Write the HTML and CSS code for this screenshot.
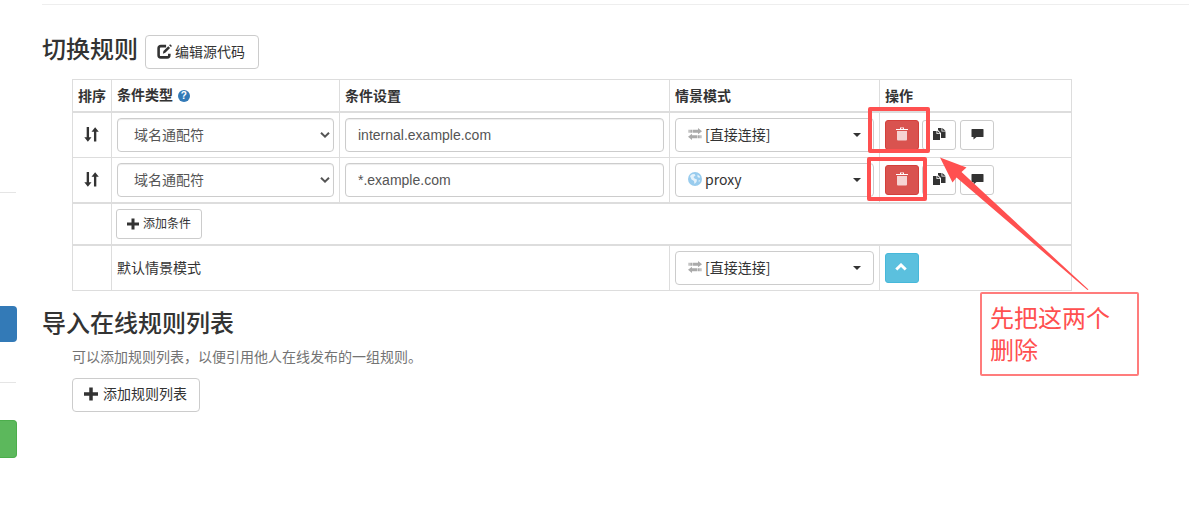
FILE: index.html
```html
<!DOCTYPE html>
<html lang="zh-CN">
<head>
    <meta charset="UTF-8">
    <meta name="viewport" content="width=device-width, initial-scale=1.0">
    <title>切换规则</title>
    <link rel="stylesheet" href="styles.css">
</head>
<body>
    <!-- Shared icons -->
    <svg class="sprite" aria-hidden="true">
        <symbol id="icon-edit" viewBox="0 0 14 14">
            <path d="M8.500 2H3.500A2 2 0 0 0 1.500 4V10.500A2 2 0 0 0 3.500 12.500H9.500A2 2 0 0 0 11.500 10.500V9" fill="none" stroke="currentColor" stroke-width="2.400"/>
            <path d="M5.500 9L6 6.500L10.500 2L12.200 3.700L7.700 8.200ZM11.300 1.200L12.300 0.200L14 1.900L13 2.900Z" fill="currentColor"/>
        </symbol>
        <symbol id="icon-sort" viewBox="0 0 14 14">
            <path d="M2.500 0H4.700V9.500H7L3.600 13.700L0.300 9.500H2.500ZM9.300 13.500H11.500V4.500H13.800L10.400 0.300L7 4.500H9.300Z" fill="currentColor"/>
        </symbol>
        <symbol id="icon-plus" viewBox="0 0 12 12">
            <path d="M4.500 0.500H7.500V4.500H12V7.500H7.500V11.500H4.500V7.500H0V4.500H4.500Z" fill="currentColor"/>
        </symbol>
        <symbol id="icon-trash" viewBox="0 0 12 14">
            <path d="M0 3V2H4V0.500H8V2H12V3ZM5 2H7V1.300H5Z" fill="currentColor" fill-rule="evenodd"/>
            <path d="M1 4H11V12.500Q11 13.500 10 13.500H2Q1 13.500 1 12.500Z" fill="currentColor" opacity=".75"/>
        </symbol>
        <symbol id="icon-copy" viewBox="0 0 13 12">
            <path d="M0 3H3.500V6H7V12H0ZM4.300 2.800L7 5.300H4.300ZM5 0H8.500V3.500H12.500V10H8V5L5 2ZM9.300 0L12.500 2.800H9.300Z" fill="currentColor"/>
        </symbol>
        <symbol id="icon-comment" viewBox="0 0 13 12">
            <path d="M1 1H12Q12.500 1 12.500 1.500V8.500Q12.500 9 12 9H5.500L2.500 11.500V9H1Q0.500 9 0.500 8.500V1.500Q0.500 1 1 1Z" fill="currentColor"/>
        </symbol>
        <symbol id="icon-transfer" viewBox="0 0 14 12">
            <path d="M0.500 1.700H1.700V4.700H0.500ZM2.200 1.700H4V4.700H2.200ZM4.500 1.700H10V0L14 3.200L10 6.200V4.700H4.500ZM13.500 7.300H12.300V10.300H13.500ZM11.800 7.300H10V10.300H11.800ZM9.500 7.300H4V5.800L0 8.800L4 12V10.300H9.500Z" fill="currentColor"/>
        </symbol>
        <symbol id="icon-globe" viewBox="0 0 14 14">
            <circle cx="7" cy="7" r="7" fill="currentColor"/>
            <path d="M2 4L4 2.200L6.500 2L7.500 3.500L5.500 5L6.500 6.500L9 7.500L8.500 10L6.500 12L6 9L3.500 7.500ZM9.500 2.500L12 4.500L11.500 6L9.500 5ZM10.500 8.500L12 8L11 10.500Z" fill="#fff" opacity=".75"/>
        </symbol>
        <symbol id="icon-up" viewBox="0 0 12 8">
            <path d="M1.300 6.500L6 2L10.700 6.500" fill="none" stroke="currentColor" stroke-width="3"/>
        </symbol>
        <symbol id="icon-chevron" viewBox="0 0 10 6">
            <path d="M1 0.800L5 4.600L9 0.800" fill="none" stroke="currentColor" stroke-width="2"/>
        </symbol>
    </svg>

    <div class="sidebar">
        <hr>
        <div class="nav-active"></div>
        <hr>
        <div class="nav-apply"></div>
    </div>

    <div class="content">
        <hr>
        <section>
            <h3><span class="title">切换规则</span>
                <button class="btn edit-btn"><svg class="icon-15"><use href="#icon-edit"/></svg> 编辑源代码</button>
            </h3>
            <table class="rules">
                <colgroup>
                    <col class="col-sort">
                    <col class="col-type">
                    <col class="col-details">
                    <col class="col-profile">
                    <col class="col-actions">
                </colgroup>
                <thead>
                    <tr>
                        <th>排序</th>
                        <th class="type-head">条件类型 <span class="help">?</span></th>
                        <th>条件设置</th>
                        <th>情景模式</th>
                        <th>操作</th>
                    </tr>
                </thead>
                <tbody>
                    <tr>
                        <td class="sort"><svg class="icon-15"><use href="#icon-sort"/></svg></td>
                        <td><div class="form-control select">域名通配符<svg class="chevron"><use href="#icon-chevron"/></svg></div></td>
                        <td><input class="form-control" type="text" value="internal.example.com"></td>
                        <td><button class="btn dropdown"><svg class="transfer"><use href="#icon-transfer"/></svg>[直接连接]<span class="caret"></span></button></td>
                        <td>
                            <div class="actions">
                                <button class="btn btn-sm btn-danger"><svg class="trash"><use href="#icon-trash"/></svg></button>
                                <button class="btn btn-sm"><svg class="icon-13"><use href="#icon-copy"/></svg></button>
                                <button class="btn btn-sm"><svg class="icon-13"><use href="#icon-comment"/></svg></button>
                            </div>
                        </td>
                    </tr>
                    <tr>
                        <td class="sort"><svg class="icon-15"><use href="#icon-sort"/></svg></td>
                        <td><div class="form-control select">域名通配符<svg class="chevron"><use href="#icon-chevron"/></svg></div></td>
                        <td><input class="form-control" type="text" value="*.example.com"></td>
                        <td><button class="btn dropdown"><svg class="globe"><use href="#icon-globe"/></svg>proxy<span class="caret"></span></button></td>
                        <td>
                            <div class="actions">
                                <button class="btn btn-sm btn-danger"><svg class="trash"><use href="#icon-trash"/></svg></button>
                                <button class="btn btn-sm"><svg class="icon-13"><use href="#icon-copy"/></svg></button>
                                <button class="btn btn-sm"><svg class="icon-13"><use href="#icon-comment"/></svg></button>
                            </div>
                        </td>
                    </tr>
                </tbody>
                <tbody>
                    <tr class="add-row">
                        <td></td>
                        <td colspan="4"><button class="btn add-condition"><svg class="icon-12"><use href="#icon-plus"/></svg> 添加条件</button></td>
                    </tr>
                </tbody>
                <tbody>
                    <tr>
                        <td></td>
                        <td colspan="2">默认情景模式</td>
                        <td><button class="btn dropdown"><svg class="transfer"><use href="#icon-transfer"/></svg>[直接连接]<span class="caret"></span></button></td>
                        <td><button class="btn btn-sm btn-info"><svg class="up"><use href="#icon-up"/></svg></button></td>
                    </tr>
                </tbody>
            </table>
        </section>
        <section>
            <h3 class="import-title">导入在线规则列表</h3>
            <p class="help-block">可以添加规则列表，以便引用他人在线发布的一组规则。</p>
            <button class="btn add-list"><svg class="icon-plus"><use href="#icon-plus"/></svg> 添加规则列表</button>
        </section>
    </div>

    <!-- Annotations over the page -->
    <div class="mark mark-first"></div>
    <div class="mark mark-second"></div>
    <svg class="arrow" viewBox="0 0 150 134">
        <path d="M0 0.500L26.500 10.500L21.500 15L148.500 132.500L147.500 133L16.500 20.500L12.500 25.500Z" fill="#ff5050"/>
    </svg>
    <div class="note">先把这两个<br>删除</div>
</body>
</html>
```
FILE: styles.css
```css
* {
    box-sizing: border-box;
}
body {
    margin: 0;
    display: flex;
    height: 518px;
    overflow: hidden;
    position: relative;
    background: #fff;
    color: #333;
    font-family: "Liberation Sans", "Noto Sans CJK SC", sans-serif;
    font-size: 14px;
    line-height: 20px;
}
svg {
    display: block;
    flex: none;
}
.sprite {
    position: absolute;
    width: 0;
    height: 0;
}
hr {
    margin: 0;
    border: 0;
    border-top: 1px solid #eee;
}

/* sidebar */
.sidebar {
    width: 17px;
    padding-top: 192px;
    flex: none;
}
.sidebar hr {
    width: 16px;
    border-color: #e5e5e5;
}
.nav-active {
    height: 36px;
    margin: 113px 0 40px;
    background: #337ab7;
    border-radius: 0 4px 4px 0;
}
.nav-apply {
    height: 38px;
    margin-top: 37px;
    background: #5cb85c;
    border: 1px solid #4cae4c;
    border-left: 0;
    border-radius: 0 4px 4px 0;
}

/* content */
.content {
    flex: 1;
    margin-left: 25px;
    padding-top: 4px;
}
h3 {
    display: flex;
    align-items: center;
    gap: 7px;
    height: 34px;
    margin: 30px 0 10px;
    font-size: 24px;
    line-height: 26px;
    font-weight: 500;
    font-family: "Noto Sans CJK SC", sans-serif;
}
.title {
    padding-bottom: 8px;
}
.btn {
    display: inline-flex;
    align-items: center;
    justify-content: center;
    height: 34px;
    padding: 0 12px;
    border: 1px solid #ccc;
    border-radius: 4px;
    background: #fff;
    color: #333;
    font-family: inherit;
    font-size: 14px;
    line-height: 20px;
}
.edit-btn {
    gap: 3px;
    width: 114px;
    padding: 0 13px 2px 11px;
    white-space: nowrap;
}
.icon-15 {
    width: 15px;
    height: 15px;
}
.icon-13 {
    width: 13px;
    height: 12px;
}
.icon-12 {
    width: 12px;
    height: 12px;
}
.icon-plus {
    width: 14px;
    height: 14px;
}

/* rules table */
.rules {
    width: 1000px;
    margin-left: 30px;
    table-layout: fixed;
    border-collapse: separate;
    border-spacing: 0;
    border-top: 1px solid #ddd;
    border-left: 1px solid #ddd;
}
.col-sort {
    width: 39px;
}
.col-type {
    width: 228px;
}
.col-details {
    width: 330px;
}
.col-profile {
    width: 210px;
}
.col-actions {
    width: 192px;
}
.rules th,
.rules td {
    height: 45px;
    padding: 0 5px;
    border-right: 1px solid #ddd;
    border-bottom: 1px solid #ddd;
    text-align: left;
    vertical-align: middle;
}
.rules th {
    height: 33px;
    border-bottom-width: 2px;
    white-space: nowrap;
}
.rules .type-head {
    padding-bottom: 2px;
}
.rules tbody:nth-of-type(1) tr:last-child td {
    height: 46px;
    border-bottom-width: 2px;
}
.rules .add-row td {
    height: 42px;
    padding-left: 4px;
    border-bottom-width: 2px;
}
.rules .sort {
    padding: 0 0 2px 11px;
}
.help {
    display: inline-block;
    width: 12px;
    height: 12px;
    margin-left: 1px;
    border-radius: 50%;
    background: #337ab7;
    color: #fff;
    font-size: 10px;
    line-height: 12px;
    text-align: center;
    vertical-align: 1px;
}
.form-control {
    display: flex;
    align-items: center;
    width: 100%;
    height: 34px;
    padding: 0 12px;
    border: 1px solid #ccc;
    border-radius: 4px;
    background: #fff;
    box-shadow: inset 0 1px 1px rgba(0, 0, 0, .075);
    color: #555;
    font-family: inherit;
    font-size: 14px;
}
.select {
    padding: 0 3px 0 16px;
}
.chevron {
    width: 10px;
    height: 6px;
    margin-left: auto;
}
.dropdown {
    display: flex;
    justify-content: flex-start;
    width: 199px;
    padding-bottom: 2px;
    font-family: "Noto Sans CJK SC", sans-serif;
}
.transfer {
    width: 14px;
    height: 12px;
    margin: 0 3px 1px 0;
    color: #aaa;
}
.globe {
    width: 14px;
    height: 14px;
    margin-right: 3px;
    color: #99ccee;
}
.caret {
    margin: 2px 0 0 auto;
    border-top: 4px solid #333;
    border-left: 4px solid transparent;
    border-right: 4px solid transparent;
}
.actions {
    display: flex;
    gap: 4px;
}
.btn-sm {
    display: flex;
    width: 34px;
    height: 30px;
    padding: 0 0 2px 1px;
    border-radius: 3px;
}
.btn-danger {
    margin-right: -1px;
    padding: 0 0 2px;
    background: #d9534f;
    border-color: #d43f3a;
    color: #fff;
}
.btn-info {
    padding: 0 2px 2px 0;
    background: #5bc0de;
    border-color: #46b8da;
    color: #fff;
}
.trash {
    width: 12px;
    height: 14px;
}
.up {
    width: 12px;
    height: 8px;
}
.add-condition {
    display: flex;
    gap: 4px;
    width: 86px;
    height: 30px;
    padding: 0;
    border-radius: 3px;
    font-size: 12px;
}

/* online rule list */
h3.import-title {
    height: 26px;
    margin: 20px 0 10px;
    padding-bottom: 4px;
}
.help-block {
    margin: 0 0 11px 30px;
    color: #737373;
}
.add-list {
    gap: 5px;
    width: 128px;
    margin-left: 30px;
    padding: 0 12px 2px 11px;
    white-space: nowrap;
}

/* annotations */
.mark {
    position: absolute;
    border: 4px solid #ff5050;
    border-radius: 2px;
}
.mark-first {
    left: 868px;
    top: 107px;
    width: 62px;
    height: 46px;
}
.mark-second {
    left: 867px;
    top: 157px;
    width: 60px;
    height: 44px;
}
.arrow {
    position: absolute;
    left: 940px;
    top: 157px;
    width: 150px;
    height: 134px;
}
.note {
    position: absolute;
    left: 980px;
    top: 292px;
    width: 159px;
    height: 84px;
    padding: 7px 8px;
    border: 2px solid #ff7c7c;
    border-radius: 2px;
    color: #ff5050;
    font-family: "Noto Sans CJK SC", sans-serif;
    font-size: 24px;
    line-height: 32px;
}
```
